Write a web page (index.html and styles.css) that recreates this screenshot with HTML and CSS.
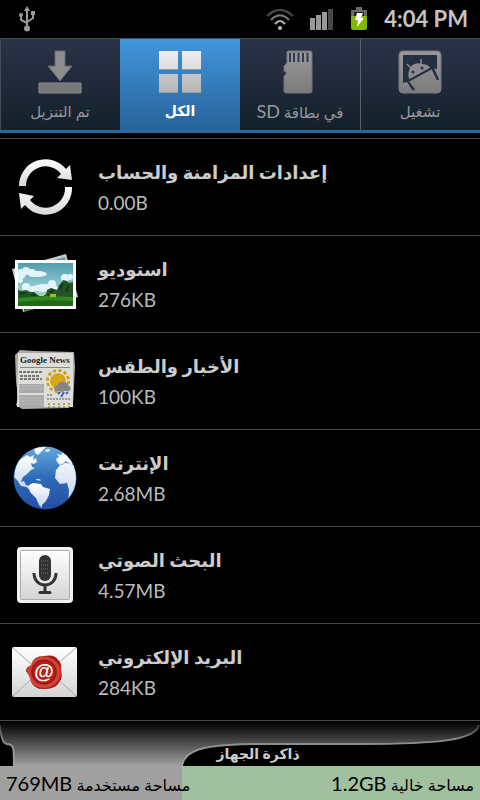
FILE: index.html
```html
<!DOCTYPE html>
<html lang="ar">
<head>
<meta charset="utf-8">
<meta name="viewport" content="width=device-width, initial-scale=1">
<title>إدارة التطبيقات</title>
<link rel="stylesheet" href="styles.css">
</head>
<body>
<header class="status">
  <svg class="usb" width="18" height="26" viewBox="0 0 18 26" fill="none" stroke="#999" stroke-width="2">
    <path d="M9 4v18M9 17l-6-3V9M9 16l6-4V8"/>
    <path d="M9 0l3 5H6z" fill="#999" stroke="none"/>
    <circle cx="9" cy="22.500" r="3" fill="#999" stroke="none"/>
    <circle cx="3" cy="9" r="2" fill="#999" stroke="none"/>
    <path d="M13 5h4v4h-4z" fill="#999" stroke="none"/>
  </svg>
  <div class="indicators">
    <svg width="28" height="23" viewBox="0 0 28 23" fill="none" stroke-width="2.200">
      <path d="M1 8Q14-4 27 8" stroke="#464646"/>
      <path d="M5 12Q14 3 23 12" stroke="#777"/>
      <path d="M9 16Q14 10 19 16" stroke="#aaa"/>
      <circle cx="14" cy="20" r="2" fill="#bbb"/>
    </svg>
    <svg width="24" height="22" viewBox="0 0 24 22" fill="#999">
      <path d="M0 10h5v12H0zM6 7h5v15H6zM12 4h5v18h-5z"/>
      <path d="M18 1h5v21h-5z" fill="#484848"/>
    </svg>
    <svg width="18" height="24" viewBox="0 0 18 24">
      <path d="M6 0h6v3h5v6H1V3h5z" fill="#6b6b6b"/>
      <path d="M4 5h10v4H4z" fill="#222"/>
      <path d="M1 9h16v12q0 2-2 2H3q-2 0-2-2z" fill="#80b800"/>
      <path d="M7 6h6l-2 5h3L7 20l1-7H5z" fill="#fff"/>
    </svg>
    <time class="clock">4:04 PM</time>
  </div>
</header>

<nav class="tabs">
  <button class="tab" type="button">
    <svg width="44" height="44" viewBox="0 0 44 44">
      <defs><linearGradient id="metal" x1="0" y1="0" x2="0" y2="1"><stop offset="0" stop-color="#999"/><stop offset="1" stop-color="#7b7b7b"/></linearGradient></defs>
      <path d="M17 1h10v15h7L22 31 10 16h7z" fill="#8d8d8d" stroke="#656a72"/>
      <path d="M1 33h42v10H1z" fill="#777" stroke="#8c8c8c"/>
    </svg>
    <span dir="rtl">تم التنزيل</span>
  </button>
  <button class="tab active" type="button" aria-current="page">
    <svg width="44" height="44" viewBox="0 0 44 44">
      <defs><linearGradient id="tile" x1="0" y1="0" x2="0" y2="44" gradientUnits="userSpaceOnUse"><stop offset="0" stop-color="#efefef"/><stop offset=".43" stop-color="#ddd"/><stop offset=".55" stop-color="#c8c8c8"/><stop offset="1" stop-color="#b3b3b3"/></linearGradient></defs>
      <path d="M1 1h19v19H1zM24 1h19v19H24zM1 24h19v19H1zM24 24h19v19H24z" fill="url(#tile)"/>
      <path d="M1 19.500h19M24 19.500h19M1 42.500h19M24 42.500h19" stroke="#989b9f"/>
    </svg>
    <span dir="rtl">الكل</span>
  </button>
  <button class="tab" type="button">
    <svg width="44" height="44" viewBox="0 0 44 44">
      <path d="M10 1h22q2 0 2 2v38q0 2-2 2H8q-2 0-2-2V26l3-3-3-2v-5l3-3V2z" fill="url(#metal)" stroke="#70747a"/>
      <path d="M12 3v9M16 3v9M20.500 3v9M25 3v9M29.500 3v9" stroke="#303a4a" stroke-width="2"/>
      <path d="M10 2h23" stroke="#858585" stroke-width="2"/>
    </svg>
    <span dir="rtl">في بطاقة <span class="latin">SD</span></span>
  </button>
  <button class="tab" type="button">
    <svg width="44" height="44" viewBox="0 0 44 44">
      <rect x="1" y="1" width="42" height="42" rx="4" fill="url(#metal)" stroke="#777b80"/>
      <path d="M5 5h34v14l-5-1L11 31l-6 8z" fill="#242f40"/>
      <path d="M11 29C8 17 17 11 24 14c5 0 8 3 9 5L13 31z" fill="#8c8c8c"/>
      <path d="M13 18l-4-4M23 14V9" stroke="#8c8c8c" stroke-width="1.500"/>
      <circle cx="15" cy="22" r="1.500" fill="#242f40"/><circle cx="24" cy="18" r="1.500" fill="#242f40"/>
      <path d="M10 31l24-13" stroke="#242f40" stroke-width="2"/>
      <path d="M34 17l6 13M10 32l6 8" stroke="#242f40" stroke-width="2.500" fill="none"/>
      <path d="M5 33l4-1 3 5-3-2-4 4z" fill="#8c8c8c"/>
    </svg>
    <span dir="rtl">تشغيل</span>
  </button>
</nav>

<main>
<ul class="apps">
  <li><button class="app" type="button">
    <svg class="icon" width="66" height="66" viewBox="0 0 66 66">
      <defs><linearGradient id="sync" x1="0" y1="0" x2="0" y2="1"><stop offset="0" stop-color="#fff"/><stop offset="1" stop-color="#d8d8d8"/></linearGradient></defs>
      <path id="arrow" d="M7 32A26.500 26.500 0 0 1 54 15L58 11 60 26 45 24 49 20A19.500 19.500 0 0 0 14 32z" fill="url(#sync)"/>
      <path d="M60 33A26.500 26.500 0 0 1 13 51L9 55 7 39 22 42 18 46A19.500 19.500 0 0 0 53 33z" fill="url(#sync)"/>
    </svg>
    <span class="text"><b dir="rtl">إعدادات المزامنة والحساب</b><span class="size">0.00B</span></span>
  </button></li>
  <li><button class="app" type="button">
    <svg class="icon" width="66" height="66" viewBox="0 0 66 66">
      <defs>
        <linearGradient id="sky" x1="0" y1="0" x2="0" y2="1"><stop offset="0" stop-color="#4f9fae"/><stop offset="1" stop-color="#c6e9ea"/></linearGradient>
        <clipPath id="photo"><path d="M6 12h55v43H6z"/></clipPath>
      </defs>
      <path d="M0 18L54 3l12 43L11 61z" fill="#ccc"/>
      <path d="M38 10l15-4 1 4z" fill="#559ba9"/>
      <path d="M3 20l2 8V19zM12 57l10 1-10 2z" fill="#28612b"/>
      <path d="M3 9h61v49H3z" fill="#fff"/>
      <g clip-path="url(#photo)">
        <path d="M6 12h55v43H6z" fill="url(#sky)"/>
        <g fill="#e4f4f8">
          <circle cx="9" cy="23" r="5"/><circle cx="14" cy="20" r="4"/><circle cx="20" cy="22" r="4"/><ellipse cx="26" cy="23" rx="9" ry="3"/><circle cx="8" cy="29" r="3"/>
          <circle cx="53" cy="27" r="4"/><circle cx="58" cy="26" r="3"/><ellipse cx="33" cy="37" rx="13" ry="4"/><circle cx="40" cy="33" r="4"/><circle cx="14" cy="36" r="4"/><circle cx="20" cy="38" r="3"/>
        </g>
        <path d="M6 39l4 1 4-1 4 2 4 0 4 3 5 1 3-2 1-4 4-2 3 1 3 1 2-5 3-3 1-2 4 1 2 2 4-1v21H6z" fill="#245326"/>
        <path d="M6 47l28-2 27 1v9H6z" fill="#2f8b20"/>
        <path d="M6 51q26-3 55-1v5H6z" fill="#22671a"/>
        <path d="M38 43h6v3h-6z" fill="#a9bb23"/><path d="M27 42h5v3h-5z" fill="#a7d3a0"/>
        <path d="M8 43l5-1M48 39l3-7M54 41l3-7M38 41l4-2M19 44l5 0" stroke="#123b1a" stroke-width="2"/>
      </g>
    </svg>
    <span class="text"><b dir="rtl">استوديو</b><span class="size">276KB</span></span>
  </button></li>
  <li><button class="app" type="button">
    <svg class="icon" width="66" height="66" viewBox="0 0 66 66">
      <path d="M3 7l5-5 15 1 39 1 1 15-2 37-4 4-47 1-6-4 2-7-2-17z" fill="#aaa"/>
      <path d="M6 5h55v54H5z" fill="#deded9"/>
      <text x="8" y="15" class="masthead">Google News</text>
      <path d="M8 19.500h50" stroke="#888"/>
      <path d="M7 24h24M8 28h20M8 31h22" stroke="#777" stroke-width="2" stroke-dasharray="3 1"/>
      <path d="M7 36h25v9H7zM7 47h25v12H7z" fill="#aaa"/>
      <path d="M7 38h25M7 41h25M7 50h25M7 53h25M7 56h25" stroke="#c0c0c0" stroke-dasharray="2 1"/>
      <circle cx="46" cy="33" r="10.500" fill="none" stroke="#cda019" stroke-width="3" stroke-dasharray="3.300 2.200"/>
      <circle cx="46" cy="33" r="8.500" fill="#d9a51b" stroke="#eee"/>
      <path d="M43 43q-3-5 3-6 2-5 7-3 3 1 3 3 5 3 1 6z" fill="#858585"/>
      <path d="M48 44l-2 2M52 44l-3 5M56 44l-2 2" stroke="#2767d8" stroke-width="2"/>
      <path d="M35 47h5M35 51h5M41 51h17" stroke="#555" stroke-dasharray="2 1"/>
      <path d="M36 56h22" stroke="#c19a35" stroke-width="2" stroke-dasharray="2 3"/><path d="M36 59h22" stroke="#666" stroke-dasharray="2 3"/>
    </svg>
    <span class="text"><b dir="rtl">الأخبار والطقس</b><span class="size">100KB</span></span>
  </button></li>
  <li><button class="app" type="button">
    <svg class="icon" width="66" height="66" viewBox="0 0 66 66">
      <defs>
        <linearGradient id="sea" x1="0" y1="0" x2="0" y2="1"><stop offset="0" stop-color="#65a9df"/><stop offset=".5" stop-color="#2d6bb8"/><stop offset="1" stop-color="#234ea5"/></linearGradient>
        <linearGradient id="land" x1="0" y1="0" x2="0" y2="1"><stop offset="0" stop-color="#fff"/><stop offset="1" stop-color="#c3d2ef"/></linearGradient>
        <clipPath id="globe"><circle cx="33" cy="33" r="31"/></clipPath>
      </defs>
      <circle cx="33" cy="33" r="31.500" fill="url(#sea)"/>
      <g clip-path="url(#globe)" fill="url(#land)">
        <path d="M2 32l2-15 8-5 3-2 3 2 4-2-1 5 3-2 1 4-3 2-3-1 1 4 3 1-4 2-4 4-4 3-2 5 3-1 2 4 4 1v4l-4-3-5-1-4-6z"/>
        <path d="M17 40l4-2 8 1 2 3 7 2-1 6-3 6-4 4 0 3-3-3-3-7-6-6-1-5z"/>
        <path d="M64 22l-4-3-6-1-5 1-5 6-1 8 5 6 7-1 2 7-1 13 9-12zM44 14l3-2-2-3 4 1 2-3-3-2 7 3 5 8 3 5-6-3-4-2-1 3-4 1-3-3z"/>
        <path d="M22 2h12l-4 4-4 4-3-2zM33 5l4-1 1 2-4 1zM24 34l4 0 1 2-5-1z"/>
      </g>
    </svg>
    <span class="text"><b dir="rtl">الإنترنت</b><span class="size">2.68MB</span></span>
  </button></li>
  <li><button class="app" type="button">
    <svg class="icon" width="66" height="66" viewBox="0 0 66 66">
      <defs><linearGradient id="plate" x1="0" y1="0" x2="0" y2="1"><stop offset="0" stop-color="#fff"/><stop offset="1" stop-color="#d4d4d4"/></linearGradient></defs>
      <rect x="5" y="5" width="56" height="56" rx="4" fill="#f2f2f2"/>
      <rect x="8.500" y="8.500" width="49" height="49" rx="1" fill="url(#plate)" stroke="#aaa"/>
      <rect x="27" y="13" width="12" height="26" rx="6" fill="#333"/>
      <path d="M29 19h8M29 23h8M29 27h8M29 31h8" stroke="#777" stroke-dasharray="1 1"/>
      <path d="M22 31c0 16 22 16 22 0M33 43v8" fill="none" stroke="#333" stroke-width="3"/>
      <path d="M28 50.500h10" stroke="#333" stroke-width="3" stroke-linecap="round"/>
    </svg>
    <span class="text"><b dir="rtl">البحث الصوتي</b><span class="size">4.57MB</span></span>
  </button></li>
  <li><button class="app" type="button">
    <svg class="icon" width="66" height="66" viewBox="0 0 66 66">
      <defs><radialGradient id="wax"><stop offset="0" stop-color="#a71712"/><stop offset=".65" stop-color="#be211a"/><stop offset=".85" stop-color="#dc4a3d"/><stop offset="1" stop-color="#9c1712"/></radialGradient></defs>
      <rect x="0" y="8" width="65" height="50" rx="2" fill="url(#plate)"/>
      <path d="M1 9l25 22h12L64 9M1 57l24-22M64 57L40 35" fill="none" stroke="#aaa"/>
      <path d="M14 32Q14 28 19 26Q21 17 32 17Q43 15 46 21Q50 24 49 31Q51 38 48 42Q44 50 33 50Q23 51 19 43Q18 37 14 32z" fill="url(#wax)"/>
      <circle cx="32" cy="33" r="12" fill="#b51f19" stroke="#851512"/>
      <text x="32" y="39" class="at">@</text>
    </svg>
    <span class="text"><b dir="rtl">البريد الإلكتروني</b><span class="size">284KB</span></span>
  </button></li>
</ul>
</main>

<footer class="storage">
  <div class="shelf">
    <svg class="curve" viewBox="0 0 480 45" preserveAspectRatio="none">
      <defs>
        <linearGradient id="fade" x1="0" y1="0" x2="0" y2="45" gradientUnits="userSpaceOnUse"><stop offset="0" stop-color="#000"/><stop offset=".15" stop-color="#151515"/><stop offset="1" stop-color="#a0a0a0"/></linearGradient>
        <linearGradient id="edge" x1="0" y1="0" x2="0" y2="45" gradientUnits="userSpaceOnUse"><stop offset="0" stop-color="#222"/><stop offset=".4" stop-color="#888"/><stop offset="1" stop-color="#a2a2a2"/></linearGradient>
      </defs>
      <path d="M0 0V4Q1 22 7 23C14 23 14 27 14 45H182C184 30 200 24 250 23H360C440 23 475 19 479 4V0z" fill="url(#fade)"/>
      <path d="M0 4Q1 22 7 23C14 23 14 27 14 45M182 45C184 30 200 24 250 23H360C440 23 475 19 479 4" fill="none" stroke="url(#edge)" stroke-width="2"/>
    </svg>
    <b class="caption" dir="rtl">ذاكرة الجهاز</b>
  </div>
  <div class="usage" style="--used: 38%">
    <span dir="rtl">مساحة مستخدمة <span class="amount">769MB</span></span>
    <span dir="rtl">مساحة خالية <span class="amount">1.2GB</span></span>
  </div>
</footer>
</body>
</html>
```
FILE: styles.css
```css
* { box-sizing: border-box; }

body {
  margin: 0;
  min-height: 100vh;
  display: flex;
  flex-direction: column;
  background: #000;
  color: #ccc;
  font-family: Lato, "DejaVu Sans", sans-serif;
}

button {
  border: 0;
  margin: 0;
  color: inherit;
  font: inherit;
  cursor: pointer;
}

svg { display: block; flex: none; }

.status {
  height: 38px;
  display: flex;
  align-items: center;
  justify-content: space-between;
  padding: 0 12px 0 18px;
}

.indicators { display: flex; align-items: center; gap: 16px; }

.clock {
  font-size: 22px;
  font-weight: bold;
  line-height: 32px;
  color: #c4c4c4;
}

.tabs {
  display: grid;
  grid-template-columns: repeat(4, 1fr);
  border-top: 1px solid #454a58;
  border-bottom: 3px solid #2968a0;
  background: linear-gradient(#2b3347, #14202c);
}

.tab {
  height: 91px;
  display: flex;
  flex-direction: column;
  align-items: center;
  gap: 4px;
  padding: 11px 0 0;
  background: none;
  color: #999;
  font-size: 15px;
  line-height: 26px;
  white-space: nowrap;
}

.tab:last-child { box-shadow: inset 1px 0 #59606b; }

.tab:first-child { box-shadow: inset 1px 0 #454c57; }

.tab.active {
  background: linear-gradient(#4296dc, #26629a);
  color: #fff;
  font-size: 14px;
  font-weight: bold;
}

.latin { font-size: 18px; }

main { flex: 1; padding-top: 5px; }

.apps {
  margin: 0;
  padding: 0;
  list-style: none;
  border-top: 1px solid #484848;
}

.apps li { border-bottom: 1px solid #484848; }

.app {
  width: 100%;
  height: 96px;
  display: flex;
  align-items: center;
  gap: 20px;
  padding: 0 12px;
  background: none;
  text-align: left;
}

.text {
  display: flex;
  flex-direction: column;
  align-items: flex-start;
  color: #ccc;
  font-size: 18px;
  line-height: 32px;
}

.size { font-size: 19px; line-height: 30px; color: #bbb; }

.masthead {
  font: bold 9px "Liberation Serif", serif;
  fill: #222;
}

.at {
  font: bold 20px "Liberation Sans", sans-serif;
  fill: #fff;
  text-anchor: middle;
}

.shelf {
  position: relative;
  height: 45px;
  display: flex;
  align-items: flex-end;
  justify-content: center;
  padding-left: 36px;
}

.curve {
  position: absolute;
  inset: 0;
  width: 100%;
  height: 100%;
}

.caption { position: relative; font-size: 14px; line-height: 24px; }

.usage {
  height: 34px;
  display: flex;
  align-items: center;
  justify-content: space-between;
  padding: 0 6px;
  background: linear-gradient(90deg, #a0a0a0 var(--used), #a0c0a0 var(--used));
  color: #000;
  font-size: 16px;
  white-space: nowrap;
}

.amount { font-size: 20px; }
```
